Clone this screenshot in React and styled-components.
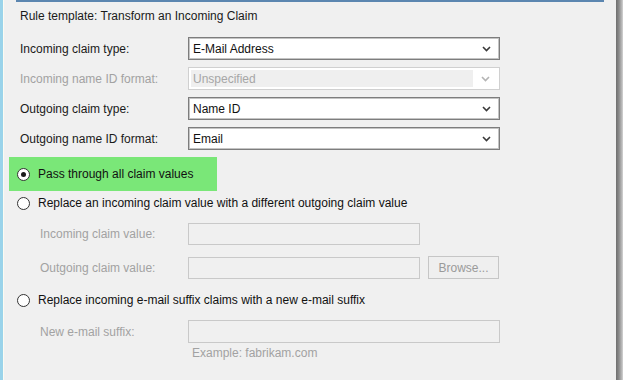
import React from "react";
import styled, { createGlobalStyle } from "styled-components";

const GlobalStyle = createGlobalStyle`
    html, body {
        margin: 0;
        padding: 0;
        background: #ffffff;
    }
    body {
        font-family: "Liberation Sans", Arial, sans-serif;
        font-size: 12px;
        color: #1a1a1a;
    }
`;

const Window = styled.div`
    display: flex;
    flex-direction: row;
    width: 630px;
    height: 380px;
    overflow: hidden;
`;

const LeftEdge = styled.div`
    width: 3px;
    background: #9ad3ea;
    border-right: 1px solid #fbfbf2;
`;

const RightEdge = styled.div`
    width: 7px;
    background: linear-gradient(to right, #6f6f6f 0%, #8a8a8a 40%, #b0b0b0 75%, #d4d4d4 100%);
`;

const Outside = styled.div`
    width: 7px;
    background: #ffffff;
`;

const Dialog = styled.div`
    flex: 1;
    display: flex;
    flex-direction: column;
    background: #f0f0f0;
`;

const TopRule = styled.div`
    height: 2px;
    margin: 0 12px;
    background: #5b86b0;
`;

const Content = styled.div`
    display: flex;
    flex-direction: column;
    padding-left: 16px;
`;

const Title = styled.div`
    margin-top: 6px;
    line-height: 16px;
    height: 16px;
`;

const FieldList = styled.div`
    display: flex;
    flex-direction: column;
    gap: 7px;
    margin-top: 13px;
`;

const Row = styled.div`
    display: grid;
    grid-template-columns: ${(p) => (p.indent ? "148px" : "168px")} auto auto;
    align-items: center;
    justify-content: start;
    margin-left: ${(p) => (p.indent ? "20px" : "0")};
    margin-top: ${(p) => p.top || 0}px;
`;

const Label = styled.span`
    color: ${(p) => (p.disabled ? "#a2a2a2" : "#1a1a1a")};
    line-height: 16px;
    white-space: nowrap;
`;

const Select = styled.div`
    position: relative;
    box-sizing: border-box;
    width: 312px;
    height: 23px;
    display: flex;
    align-items: center;
    padding-left: 4px;
    background: #ffffff;
    border: 1px solid #7d7d7d;
    box-shadow: inset 0 0 0 1px #c4c4c4;
    color: #111;
`;

const DisabledSelect = styled.div`
    box-sizing: border-box;
    width: 312px;
    height: 23px;
    display: flex;
    align-items: stretch;
    border: 1px solid #d0d0d0;
    background: #ffffff;
    padding: 2px;
`;

const DisabledValue = styled.div`
    flex: 1;
    display: flex;
    align-items: center;
    padding-left: 2px;
    background: #efefef;
    color: #a6a6a6;
`;

const ArrowSlot = styled.div`
    width: 24px;
    display: flex;
    align-items: center;
    justify-content: center;
`;

const SelectArrow = styled.div`
    position: absolute;
    right: 3px;
    top: 0;
    bottom: 0;
    width: 20px;
    display: flex;
    align-items: center;
    justify-content: center;
`;

const TextBox = styled.div`
    box-sizing: border-box;
    width: ${(p) => p.width}px;
    height: ${(p) => p.height || 22}px;
    border: 1px solid #c9c9c9;
    background: #f0f0f0;
`;

const Button = styled.div`
    box-sizing: border-box;
    width: 71px;
    height: 23px;
    margin-left: 8px;
    display: flex;
    align-items: center;
    justify-content: center;
    border: 1px solid #c6c6c6;
    background: #efefef;
    color: #9a9a9a;
`;

const Highlight = styled.div`
    box-sizing: border-box;
    width: 208px;
    height: 34px;
    margin-top: 7px;
    margin-left: -11px;
    padding-left: 8px;
    display: flex;
    align-items: center;
    background: #7ae778;
`;

const RadioRow = styled.label`
    display: flex;
    align-items: center;
    gap: 8px;
    height: 16px;
    margin-left: ${(p) => (p.inset ? "0" : "-3px")};
    margin-top: ${(p) => p.top || 0}px;
    line-height: 16px;
    color: #111;
`;

const RadioCircle = styled.span`
    box-sizing: border-box;
    width: 13px;
    height: 13px;
    border-radius: 50%;
    border: 1px solid #333333;
    background: #ffffff;
    display: flex;
    align-items: center;
    justify-content: center;
    flex-shrink: 0;
    &::after {
        content: "";
        width: 5px;
        height: 5px;
        border-radius: 50%;
        background: ${(p) => (p.checked ? "#1a1a1a" : "transparent")};
    }
`;

const Hint = styled.div`
    margin-left: 172px;
    margin-top: 3px;
    line-height: 14px;
    color: #a2a2a2;
`;

function Chevron({ color }) {
    return (
        <svg width="9" height="6" viewBox="0 0 9 6">
            <path d="M1 1 L4.5 4.5 L8 1" fill="none" stroke={color} strokeWidth="1.6" />
        </svg>
    );
}

function Dropdown({ value }) {
    return (
        <Select>
            {value}
            <SelectArrow>
                <Chevron color="#3a3a3a" />
            </SelectArrow>
        </Select>
    );
}

function Radio({ checked, children, inset, top }) {
    return (
        <RadioRow inset={inset} top={top}>
            <RadioCircle checked={checked} />
            {children}
        </RadioRow>
    );
}

export default function App() {
    return (
        <>
            <GlobalStyle />
            <Window>
                <LeftEdge />
                <Dialog>
                    <TopRule />
                    <Content>
                        <Title>Rule template: Transform an Incoming Claim</Title>
                        <FieldList>
                            <Row>
                                <Label>Incoming claim type:</Label>
                                <Dropdown value="E-Mail Address" />
                            </Row>
                            <Row>
                                <Label disabled>Incoming name ID format:</Label>
                                <DisabledSelect>
                                    <DisabledValue>Unspecified</DisabledValue>
                                    <ArrowSlot>
                                        <Chevron color="#b4b4b4" />
                                    </ArrowSlot>
                                </DisabledSelect>
                            </Row>
                            <Row>
                                <Label>Outgoing claim type:</Label>
                                <Dropdown value="Name ID" />
                            </Row>
                            <Row>
                                <Label>Outgoing name ID format:</Label>
                                <Dropdown value="Email" />
                            </Row>
                        </FieldList>
                        <Highlight>
                            <Radio inset checked>Pass through all claim values</Radio>
                        </Highlight>
                        <Radio top={4}>Replace an incoming claim value with a different outgoing claim value</Radio>
                        <Row indent top={12}>
                            <Label disabled>Incoming claim value:</Label>
                            <TextBox width={232} />
                        </Row>
                        <Row indent top={11}>
                            <Label disabled>Outgoing claim value:</Label>
                            <TextBox width={232} />
                            <Button>Browse...</Button>
                        </Row>
                        <Radio top={13}>Replace incoming e-mail suffix claims with a new e-mail suffix</Radio>
                        <Row indent top={12}>
                            <Label disabled>New e-mail suffix:</Label>
                            <TextBox width={312} height={23} />
                        </Row>
                        <Hint>Example: fabrikam.com</Hint>
                    </Content>
                </Dialog>
                <RightEdge />
                <Outside />
            </Window>
        </>
    );
}
